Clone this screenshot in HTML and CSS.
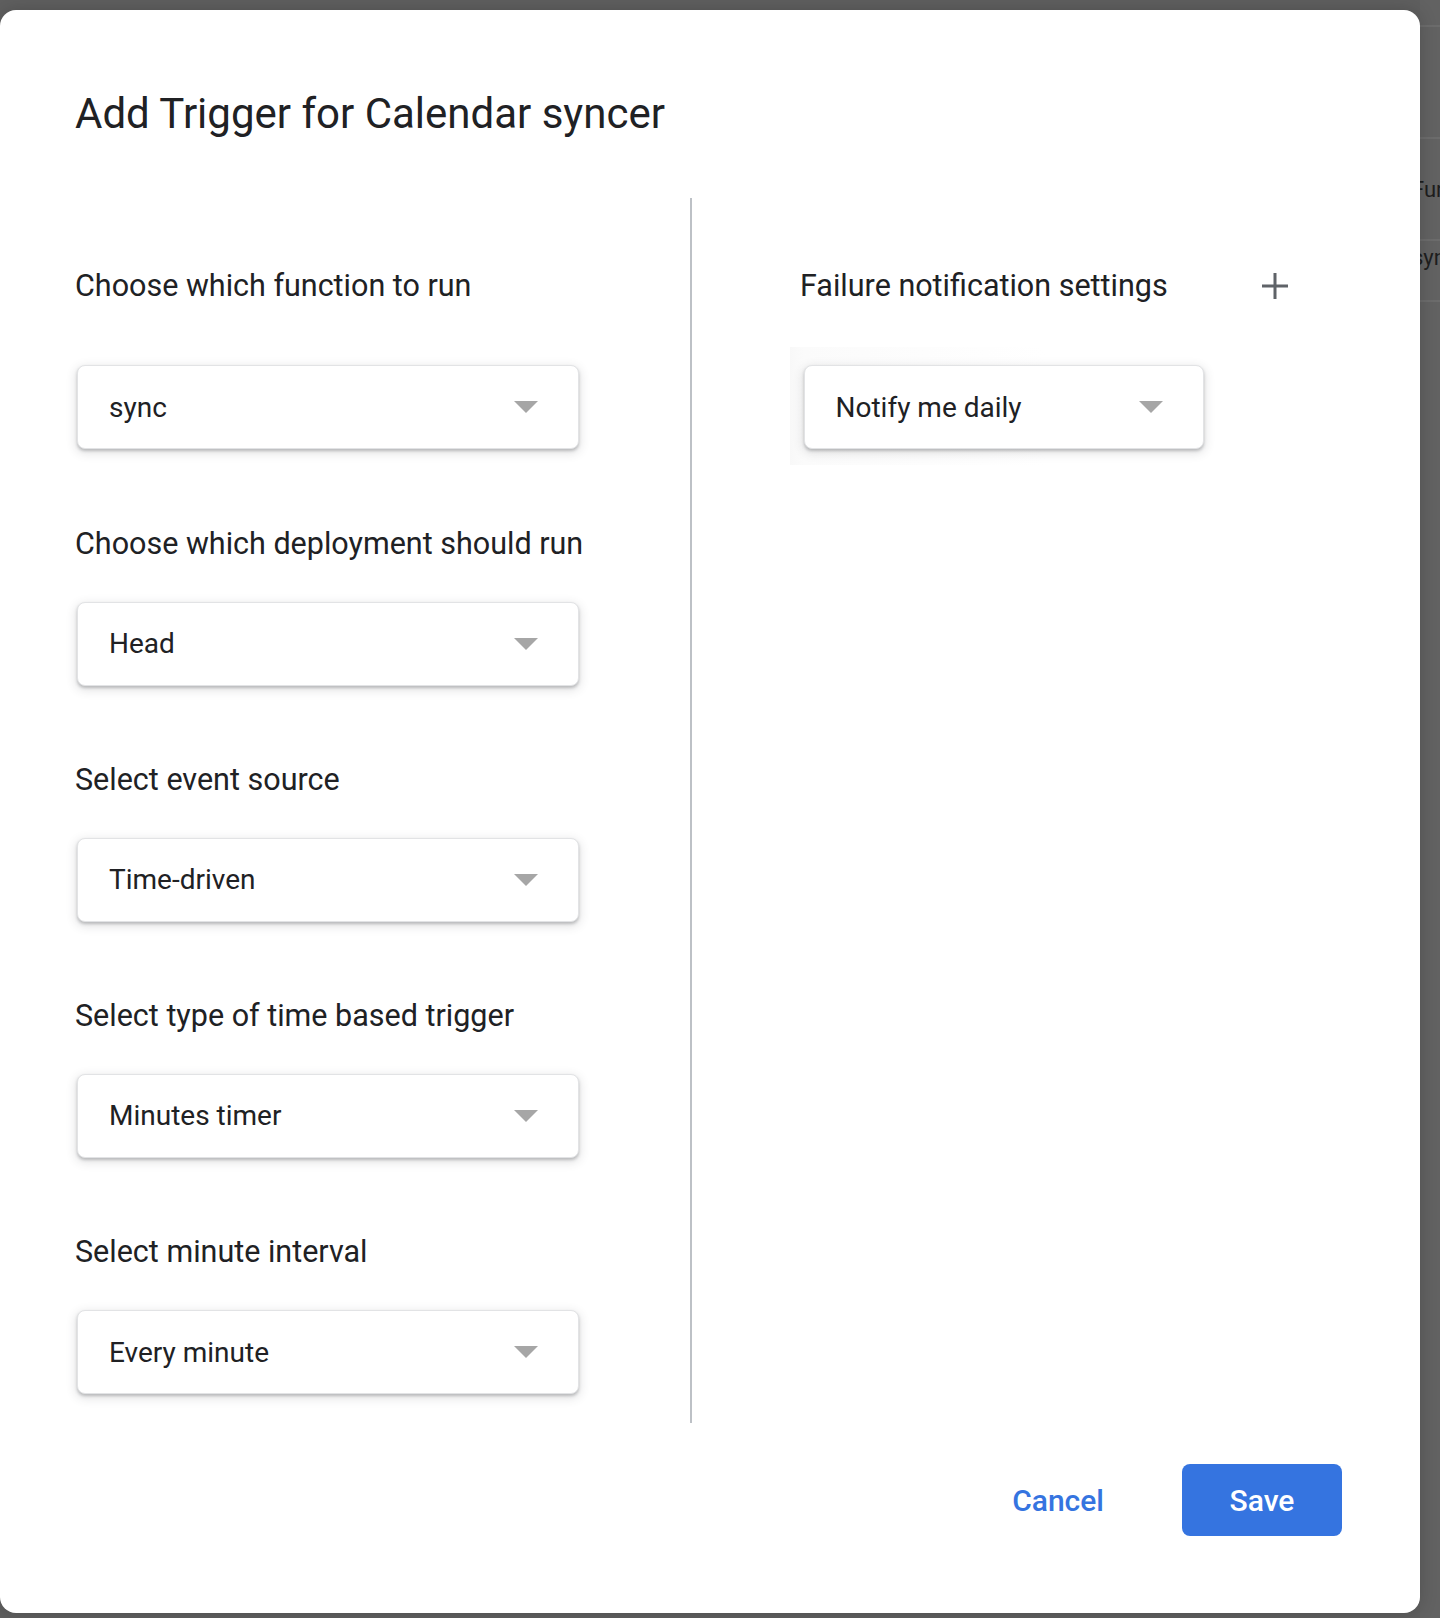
FILE: index.html
```html
<!DOCTYPE html>
<html lang="en">
<head>
<meta charset="utf-8">
<title>Add Trigger for Calendar syncer</title>
<link rel="stylesheet" href="styles.css">
</head>
<body>
<div class="screen">
  <div class="dialog">
    <h1 class="title">Add Trigger for Calendar syncer</h1>
    <div class="body">
      <div class="col col-left">
        <div class="field field-first">
          <div class="label">Choose which function to run</div>
          <div class="select"><span>sync</span><svg class="caret" viewBox="0 0 24 12" width="24" height="12"><polygon points="0,0 24,0 12,12"/></svg></div>
        </div>
        <div class="field">
          <div class="label">Choose which deployment should run</div>
          <div class="select"><span>Head</span><svg class="caret" viewBox="0 0 24 12" width="24" height="12"><polygon points="0,0 24,0 12,12"/></svg></div>
        </div>
        <div class="field">
          <div class="label">Select event source</div>
          <div class="select"><span>Time-driven</span><svg class="caret" viewBox="0 0 24 12" width="24" height="12"><polygon points="0,0 24,0 12,12"/></svg></div>
        </div>
        <div class="field">
          <div class="label">Select type of time based trigger</div>
          <div class="select"><span>Minutes timer</span><svg class="caret" viewBox="0 0 24 12" width="24" height="12"><polygon points="0,0 24,0 12,12"/></svg></div>
        </div>
        <div class="field">
          <div class="label">Select minute interval</div>
          <div class="select"><span>Every minute</span><svg class="caret" viewBox="0 0 24 12" width="24" height="12"><polygon points="0,0 24,0 12,12"/></svg></div>
        </div>
      </div>
      <div class="col col-right">
        <div class="label-row">
          <div class="label">Failure notification settings</div>
          <svg class="plus" viewBox="0 0 28 28" width="28" height="28"><path d="M14 1V27M1 14H27"/></svg>
        </div>
        <div class="notify-wrap">
          <div class="select select-narrow"><span>Notify me daily</span><svg class="caret" viewBox="0 0 24 12" width="24" height="12"><polygon points="0,0 24,0 12,12"/></svg></div>
        </div>
      </div>
    </div>
    <div class="footer">
      <button class="btn-text">Cancel</button>
      <button class="btn-primary">Save</button>
    </div>
  </div>
  <div class="page-strip">
    <div class="strip-head"></div>
    <div class="strip-row row-tall"><span class="strip-text">Function</span></div>
    <div class="strip-row row-short"><span class="strip-text">sync</span></div>
  </div>
</div>
</body>
</html>
```

FILE: styles.css
```css
html, body {
  margin: 0;
  padding: 0;
}

body {
  background: #5f5f5f;
  font-family: Roboto, "Liberation Sans", Arial, sans-serif;
  overflow: hidden;
}

.screen {
  display: flex;
  align-items: flex-start;
  width: 1440px;
  height: 1618px;
}

.dialog {
  flex: none;
  width: 1420px;
  height: 1603px;
  margin-top: 10px;
  background: #ffffff;
  border-radius: 16px;
  box-sizing: border-box;
  padding-top: 79px;
  display: flex;
  flex-direction: column;
  box-shadow: 0 0 18px rgba(0, 0, 0, 0.18);
  position: relative;
  z-index: 1;
}

.title {
  margin: 0;
  padding-left: 75px;
  font-size: 42px;
  font-weight: 400;
  line-height: 50px;
  color: #202124;
}

.body {
  display: flex;
  margin-top: 59px;
  height: 1225px;
}

.col {
  box-sizing: border-box;
  padding-top: 70px;
}

.col-left {
  width: 690px;
  padding-left: 75px;
}

.col-right {
  flex: 1;
  border-left: 2px solid #bdc1c6;
  padding-left: 108px;
  padding-right: 130px;
}

.label {
  font-size: 30.5px;
  line-height: 36px;
  color: #202124;
  white-space: nowrap;
}

.field + .field {
  margin-top: 76.4px;
}

.field .label {
  margin-bottom: 39.8px;
}

.field-first .label {
  margin-bottom: 61.4px;
}

.select {
  margin-left: 2px;
  width: 502px;
  height: 84px;
  box-sizing: border-box;
  border: 1px solid #e2e3e5;
  border-radius: 8px;
  background: #ffffff;
  box-shadow: 0 2px 3px rgba(60, 64, 67, 0.28), 0 3px 10px 2px rgba(60, 64, 67, 0.13);
  display: flex;
  align-items: center;
  justify-content: space-between;
  padding: 0 40px 0 31px;
  font-size: 28px;
  color: #202124;
}

.caret {
  display: block;
  fill: #a6a6a6;
}

.label-row {
  display: flex;
  align-items: center;
  justify-content: space-between;
  height: 36px;
}

.plus {
  display: block;
  margin-right: 1px;
  fill: none;
  stroke: #5f6368;
  stroke-width: 3;
}

.notify-wrap {
  margin-top: 43.4px;
  margin-left: -10px;
  width: 414px;
  padding: 18px 0 16px 13.5px;
  background: linear-gradient(to right, #f8f8f8 0, #fbfbfb 13.5px, #ffffff 60%);
}

.select-narrow {
  margin-left: 0;
  width: 400px;
}

.footer {
  margin-top: 41px;
  height: 72px;
  display: flex;
  justify-content: flex-end;
  align-items: center;
  gap: 54px;
  padding-right: 78px;
}

.btn-text {
  height: 72px;
  padding: 0 24px;
  background: none;
  border: 0;
  font-family: Roboto, "Liberation Sans", Arial, sans-serif;
  font-size: 30px;
  font-weight: 500;
  color: #3574e0;
}

.btn-primary {
  width: 160px;
  height: 72px;
  padding: 0;
  border: 0;
  border-radius: 8px;
  background: #3574e0;
  font-family: Roboto, "Liberation Sans", Arial, sans-serif;
  font-size: 30px;
  font-weight: 500;
  color: #ffffff;
}

.page-strip {
  flex: 1;
  align-self: stretch;
  overflow: hidden;
  background: #626262;
  padding-top: 25px;
}

.strip-head {
  height: 110px;
  border-top: 2px solid #6c6c6c;
}

.strip-row {
  border-top: 2px solid #6c6c6c;
  display: flex;
  align-items: center;
  font-size: 22px;
  color: #1e1e1e;
  white-space: nowrap;
}

.row-tall {
  height: 100px;
}

.row-short {
  height: 63px;
  border-bottom: 2px solid #6c6c6c;
  align-items: flex-start;
  padding-top: 4px;
  box-sizing: border-box;
}

.strip-text {
  margin-left: -8px;
}
```
